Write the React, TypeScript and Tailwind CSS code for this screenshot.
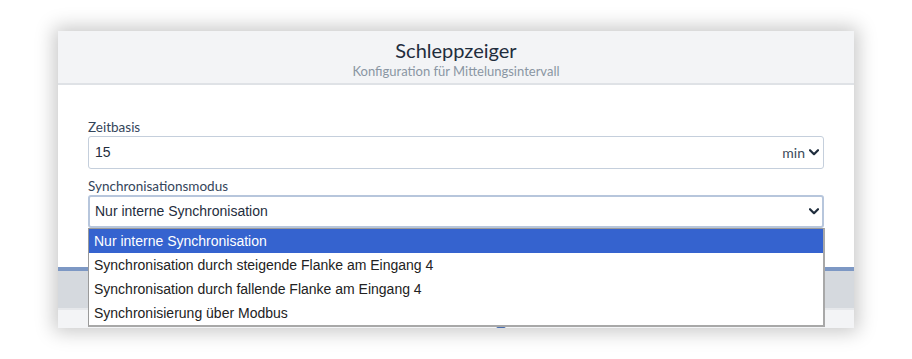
import React from "react";

const Chevron = ({ className = "" }: { className?: string }) => (
  <svg viewBox="0 0 10 7" width="10" height="7" className={className}>
    <path d="M1 1.2 L5 5.2 L9 1.2" fill="none" stroke="#1f2d3d" strokeWidth="2.2" strokeLinecap="round" strokeLinejoin="round" />
  </svg>
);

export default function App() {
  const ui = { fontFamily: "Lato, 'Open Sans', sans-serif" };
  const arial = { fontFamily: "'Liberation Sans', Arial, sans-serif" };
  const options = [
    "Nur interne Synchronisation",
    "Synchronisation durch steigende Flanke am Eingang 4",
    "Synchronisation durch fallende Flanke am Eingang 4",
    "Synchronisierung über Modbus",
  ];
  return (
    <div className="w-[912px] h-[359px] bg-white pt-[31px] pl-[58px] overflow-hidden">
      <div className="relative w-[796px] h-[297px] bg-white shadow-[0_0_18px_4px_rgba(0,0,0,0.22)] overflow-hidden" style={ui}>
        <div className="h-[54px] bg-[#f3f4f6] border-b-2 border-[#dfe2e6] flex flex-col items-center pt-[6px]">
          <div className="text-[20px] leading-[26px] text-[#1f2d3d]">Schleppzeiger</div>
          <div className="text-[13px] leading-[18px] text-[#8a96a3] mt-[-1px]">Konfiguration für Mittelungsintervall</div>
        </div>
        <div className="px-[30px] pt-[34px]">
          <div className="text-[13.5px] leading-[16px] text-[#34455a]">Zeitbasis</div>
          <div className="mt-[1px] h-[33px] border border-[#c5cfdc] rounded-[3px] flex items-center justify-between pl-[6px] pr-[4px]">
            <span className="text-[14px] text-[#1f2d3d]" style={arial}>15</span>
            <span className="flex items-center gap-[4px] text-[14px] text-[#3b4a5a]">
              min
              <Chevron />
            </span>
          </div>
          <div className="mt-[9px] text-[13.5px] leading-[16px] text-[#34455a]">Synchronisationsmodus</div>
          <div className="mt-[1px] h-[33px] border-2 border-[#b7c6dc] rounded-[3px] flex items-center justify-between pl-[5px] pr-[3px]">
            <span className="text-[14px] text-[#1f2d3d]" style={arial}>Nur interne Synchronisation</span>
            <Chevron />
          </div>
        </div>
        <div className="mt-[39px] h-[4px] bg-[#7d98c4]" />
        <div className="h-[39px] bg-[#d5d9de] border-b-2 border-[#e6e8eb]" />
        <div className="h-[20px] bg-[#f3f4f6] flex justify-center items-start pt-[13px] pl-[10px] gap-[6px]">
          <span className="text-[16px] leading-[20px] text-[#1f2d3d]">Mittelwert</span>
          <span className="w-[14px] h-[14px] rounded-full bg-[#4a6fb0] mt-[3px]" />
        </div>
        <div className="absolute left-[30px] top-[197px] w-[737px] bg-white border border-[#9a9a9a] border-r-2 border-b-2 border-r-[#a8a8a8] border-b-[#a8a8a8]" style={arial}>
          {options.map((o, i) => (
            <div
              key={o}
              className={
                "h-[24px] flex items-center pl-[5px] text-[14px] " +
                (i === 0 ? "bg-[#3563cf] text-white" : "text-[#222]")
              }
            >
              {o}
            </div>
          ))}
        </div>
      </div>
    </div>
  );
}
